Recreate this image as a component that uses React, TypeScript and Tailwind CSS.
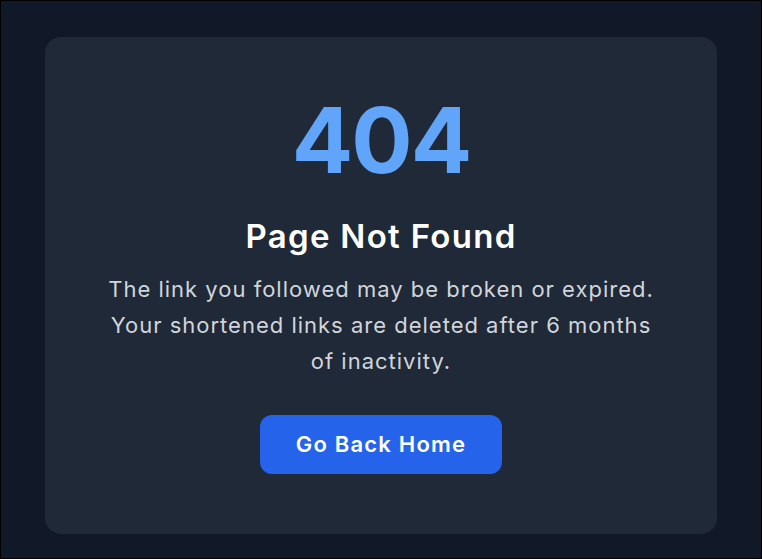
export default function App() {
  return (
    <div
      className="flex h-[559px] w-full flex-col items-center border border-black bg-[#111827] pt-[36px]"
      style={{ fontFamily: "Inter, 'Noto Sans', sans-serif" }}
    >
      <div className="flex h-[497px] w-[672px] flex-col items-center rounded-2xl bg-[#1f2937] px-12 pt-[58px] text-center">
        <h1 className="text-[91px] font-bold leading-none tracking-[-2px] text-[#60a5fa]">404</h1>
        <h2 className="mt-[30px] text-[33px] font-semibold leading-[40px] tracking-[1.3px] text-white">
          Page Not Found
        </h2>
        <p className="mt-[15px] text-[22px] leading-[36px] tracking-[1px] text-[#d1d5db]">
          The link you followed may be broken or expired.
          <br />
          Your shortened links are deleted after 6 months
          <br />
          of inactivity.
        </p>
        <button className="mt-[36px] flex h-[59px] w-[242px] items-center justify-center rounded-xl bg-[#2563eb] text-[22px] font-semibold tracking-[1.2px] text-white">
          Go Back Home
        </button>
      </div>
    </div>
  );
}
